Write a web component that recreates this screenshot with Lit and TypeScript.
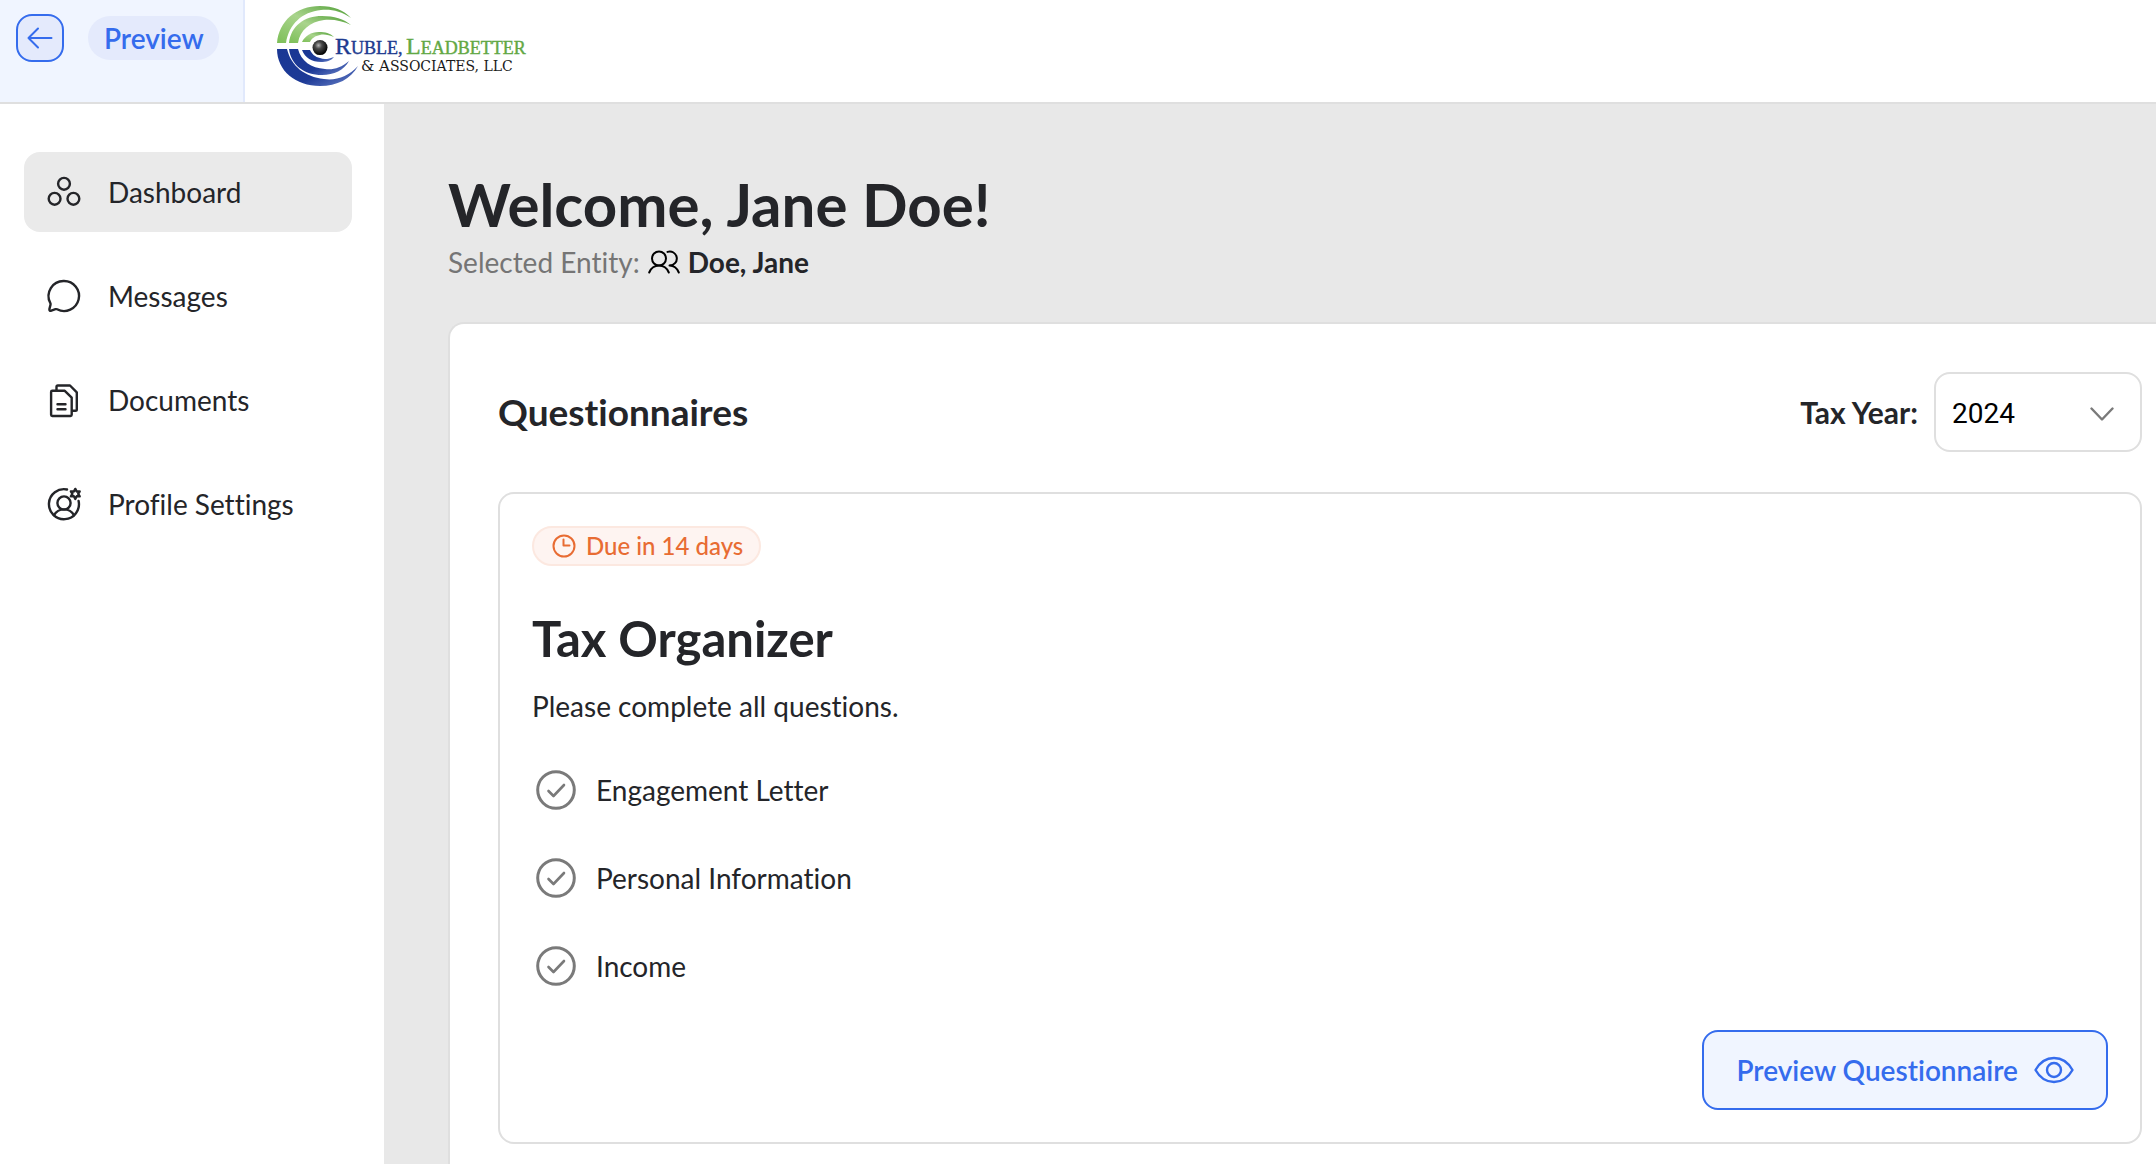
import { LitElement, html, svg, css } from "lit";
import { customElement, state } from "lit/decorators.js";
import { classMap } from "lit/directives/class-map.js";

const icons = {
  dashboard: svg`<circle cx="16" cy="7.800" r="5.900"/><circle cx="6.600" cy="22.800" r="5.900"/><circle cx="25.400" cy="22.800" r="5.900"/>`,
  messages: svg`<path d="M16 1a15 15 0 1 1-6.900 28.300c-.6-.3-1-.3-1.600-.1l-4.200 1.500c-1.300.5-2.200-.3-1.900-1.600l1.100-4.300c.2-.7.1-1.200-.2-1.800A15 15 0 0 1 16 1Z"/>`,
  documents: svg`<path d="M8.500 6.300V2.800c0-.8.6-1.300 1.300-1.300H22l6.800 6.800V25.500c0 .8-.6 1.300-1.300 1.300h-3.300"/><path d="M4.300 6.800h12.500L23.700 13.600v17.200c0 .7-.5 1.200-1.200 1.200H4.300c-.7 0-1.200-.5-1.200-1.200V8c0-.7.5-1.200 1.200-1.200Z"/><path d="M9.500 20.300h8M9.500 25.300h8"/>`,
  profile: svg`<path d="M19 1.500A15 15 0 1 0 30.600 13"/><circle cx="16" cy="15" r="6.600"/><path d="M6 27.300c2-3.700 5.600-5.900 10-5.900s8 2.200 10 5.900"/><path d="m27.300.9 1.400 2.600 3-.1-1.500 2.500 1.500 2.500-3-.1-1.400 2.600-1.400-2.600-3 .1 1.500-2.500-1.500-2.500 3 .1Z"/>`,
};

interface NavItem {
  id: string;
  label: string;
  icon: unknown;
}

const NAV: NavItem[] = [
  { id: "dashboard", label: "Dashboard", icon: icons.dashboard },
  { id: "messages", label: "Messages", icon: icons.messages },
  { id: "documents", label: "Documents", icon: icons.documents },
  { id: "profile", label: "Profile Settings", icon: icons.profile },
];

const STEPS = ["Engagement Letter", "Personal Information", "Income"];

@customElement("firm-logo")
export class FirmLogo extends LitElement {
  static styles = css`
    :host { display: block; }
    svg { display: block; }
    .serif { font-family: "Liberation Serif", serif; }
    .wide { font-family: "DejaVu Serif", serif; }
    .blue { fill: #1d3a8f; stroke: #1d3a8f; }
    .green { fill: #62a844; stroke: #62a844; }
    .name { stroke-width: 0.4; }
    .big { font-size: 24px; }
    .small { font-size: 18px; }
    .tag-big { font-size: 15px; }
    .tag { font-size: 14px; fill: #1a1a1a; }
  `;

  render() {
    return html`
      <svg width="256" height="90" viewBox="0 0 256 90" role="img" aria-label="Ruble, Leadbetter &amp; Associates, LLC">
        <defs>
          <linearGradient id="leaf" x1="0" y1="1" x2="1" y2="0">
            <stop offset="0" stop-color="#7dbf58"/><stop offset=".5" stop-color="#a9d48c"/><stop offset="1" stop-color="#4f9e35"/>
          </linearGradient>
          <linearGradient id="sea" x1="0" y1="0" x2="1" y2="1">
            <stop offset="0" stop-color="#1a3794"/><stop offset=".6" stop-color="#1d3a96"/><stop offset="1" stop-color="#6d86cc"/>
          </linearGradient>
          <radialGradient id="ball" cx=".4" cy=".35" r=".65">
            <stop offset="0" stop-color="#b5b5b5"/><stop offset=".35" stop-color="#4a4a4a"/><stop offset="1" stop-color="#000"/>
          </radialGradient>
        </defs>
        <g fill="url(#leaf)">
          <path d="M0 43C2 21 19 6 43 6c13 0 24 4 31 12C64 11 54 9 44 10 25 12 12 24 9 43Z"/>
          <path d="M12 43C14 26 27 16 45 16c12 0 22 3 29 9-8-4-18-6-27-5-14 2-24 10-26 23Z"/>
          <path d="M25 42c3-6 9-10 17-10 6 0 11 1 15 5-5-2-10-3-14-2-5 1-8 3-10 7Z"/>
        </g>
        <g fill="url(#sea)">
          <path d="M0 49c0 22 19 37 43 37 17 0 31-7 38-20-9 10-22 15-34 13C28 77 14 66 10 49Z"/>
          <path d="M12 49c2 16 15 26 33 26 12 0 22-5 27-14-8 7-16 9-24 8-14-1-24-8-27-20Z"/>
          <path d="M25 50c3 8 10 12 19 12 5 0 10-1 13-5-5 2-10 3-14 1-5-1-8-4-10-8Z"/>
        </g>
        <circle cx="43" cy="47.600" r="7.500" fill="url(#ball)"/>
        <text class="serif name" y="54" x="58"><tspan class="blue big">R</tspan><tspan class="blue small">UBLE,</tspan></text>
        <text class="serif name" y="54" x="129"><tspan class="green big">L</tspan><tspan class="green small">EADBETTER</tspan></text>
        <text class="wide tag" y="71" x="84"><tspan class="tag-big">&amp; A</tspan>SSOCIATES, LLC</text>
      </svg>
    `;
  }
}

@customElement("app-root")
export class AppRoot extends LitElement {
  @state() private active = "dashboard";
  @state() private year = "2024";

  static styles = css`
    :host {
      display: flex;
      flex-direction: column;
      min-height: 100vh;
      box-sizing: border-box;
      background: #fff;
      color: #242529;
      font-family: Lato, "Open Sans", sans-serif;
      font-size: 28px;
      line-height: 40px;
      font-variant-ligatures: none;
    }
    *, *::before, *::after { box-sizing: border-box; }
    h1, h2, h3, p, ul { margin: 0; padding: 0; }
    ul { list-style: none; }
    svg { display: block; flex: none; }
    button, select { font: inherit; color: inherit; cursor: pointer; }
    .line {
      fill: none;
      stroke: currentColor;
      stroke-width: 2;
      stroke-linecap: round;
      stroke-linejoin: round;
    }
    .line.bold { stroke-width: 2.4; }

    .topbar { display: flex; height: 104px; border-bottom: 2px solid #dfdfdf; }
    .preview {
      display: flex;
      align-items: flex-start;
      gap: 24px;
      padding: 14px 24px 0 16px;
      background: #f0f5ff;
      border-right: 2px solid #e1e9fc;
    }
    .back {
      display: grid;
      place-items: center;
      width: 48px;
      height: 48px;
      padding: 0;
      border: 2px solid #356ced;
      border-radius: 16px;
      background: #e4eafc;
      color: #356ced;
    }
    .pill {
      margin-top: 2px;
      padding: 0 15px 0 16px;
      border-radius: 22px;
      background: #e4eafc;
      color: #356ced;
      font-weight: 600;
      line-height: 44px;
    }
    .logo { padding: 0 32px; }

    .body { display: flex; flex: 1; }
    .sidebar { flex: none; width: 384px; padding: 48px 32px 48px 24px; }
    .nav { display: flex; flex-direction: column; gap: 24px; }
    .nav-link {
      display: flex;
      align-items: center;
      gap: 28px;
      height: 80px;
      padding: 0 24px;
      border-radius: 16px;
      color: inherit;
      text-decoration: none;
    }
    .nav-link.active { background: #eaeaea; }

    .main {
      flex: 1;
      min-width: 0;
      display: flex;
      flex-direction: column;
      padding: 64px 0 0 64px;
      background: #e8e8e8;
    }
    .title { font-size: 60px; font-weight: 700; line-height: 72px; }
    .entity { display: flex; align-items: center; gap: 8px; margin: 2px 0 40px; }
    .entity-label { color: #757575; }
    .entity-name { font-weight: 700; }
    .people { color: #000; }

    .panel {
      flex: 1;
      padding: 48px 14px 18px 48px;
      border: 2px solid #dfdfdf;
      border-width: 2px 0 0 2px;
      border-top-left-radius: 16px;
      background: #fff;
    }
    .panel-head { display: flex; align-items: center; justify-content: space-between; margin-bottom: 40px; }
    .heading { font-size: 37px; font-weight: 700; line-height: 48px; }
    .year { display: flex; align-items: center; gap: 16px; }
    .year-label { font-size: 30px; font-weight: 700; }
    .select { display: grid; align-items: center; width: 208px; }
    .select > * { grid-area: 1 / 1; }
    .select select {
      appearance: none;
      width: 100%;
      height: 80px;
      padding: 4px 56px 0 16px;
      border: 2px solid #dfdfdf;
      border-radius: 16px;
      background: #fff;
      color: #000;
      font-family: Roboto, sans-serif;
    }
    .chevron { justify-self: end; margin: 4px 28px 0 0; color: #7a7a7a; pointer-events: none; }

    .card {
      display: flex;
      flex-direction: column;
      align-items: flex-start;
      padding: 32px;
      border: 2px solid #dfdfdf;
      border-radius: 16px;
    }
    .due {
      display: flex;
      align-items: center;
      gap: 10px;
      height: 40px;
      padding: 0 16px 0 18px;
      border: 2px solid #fce8e0;
      border-radius: 20px;
      background: #fef4f1;
      color: #e86c33;
      font-size: 24px;
      font-weight: 500;
    }
    .card-title { margin-top: 42px; font-size: 49px; font-weight: 700; line-height: 60px; }
    .card-text { margin-top: 18px; }
    .steps { display: flex; flex-direction: column; gap: 48px; margin-top: 44px; }
    .step { display: flex; align-items: center; gap: 16px; }
    .step-icon { color: #7a7a7a; }
    .action {
      display: flex;
      align-items: center;
      align-self: flex-end;
      gap: 16px;
      height: 80px;
      margin-top: 44px;
      padding: 0 32px;
      border: 2px solid #356ced;
      border-radius: 16px;
      background: #f0f5ff;
      color: #356ced;
      font-weight: 600;
    }
  `;

  private select(event: Event, id: string) {
    event.preventDefault();
    this.active = id;
  }

  render() {
    return html`
      <header class="topbar">
        <div class="preview">
          <button class="back" aria-label="Back">
            <svg class="line" width="26" height="22" viewBox="0 0 26 22"><path d="M24.500 11H1.500M11 1.500 1.500 11l9.500 9.500"/></svg>
          </button>
          <span class="pill">Preview</span>
        </div>
        <firm-logo class="logo"></firm-logo>
      </header>
      <div class="body">
        <aside class="sidebar">
          <nav class="nav">
            ${NAV.map(
              (item) => html`
                <a
                  href="#${item.id}"
                  class=${classMap({ "nav-link": true, active: item.id === this.active })}
                  @click=${(e: Event) => this.select(e, item.id)}
                >
                  <svg class="line bold" width="32" height="32" viewBox="0 0 32 32" overflow="visible">${item.icon}</svg>
                  <span>${item.label}</span>
                </a>
              `,
            )}
          </nav>
        </aside>
        <main class="main">
          <h1 class="title">Welcome, Jane Doe!</h1>
          <p class="entity">
            <span class="entity-label">Selected Entity:</span>
            <svg class="line people" width="32" height="24" viewBox="0 0 32 24">
              <circle cx="11" cy="8.500" r="7"/><path d="M1.200 22.500c1.800-4.300 5.300-7 9.800-7s8 2.700 9.800 7M19.500 1.900a7 7 0 1 1 2 13.600c4.500 0 7.500 2.700 9.300 7"/>
            </svg>
            <span class="entity-name">Doe, Jane</span>
          </p>
          <section class="panel">
            <div class="panel-head">
              <h2 class="heading">Questionnaires</h2>
              <div class="year">
                <label class="year-label" for="tax-year">Tax Year:</label>
                <div class="select">
                  <select id="tax-year" .value=${this.year} @change=${(e: Event) => (this.year = (e.target as HTMLSelectElement).value)}>
                    <option>2024</option>
                    <option>2023</option>
                  </select>
                  <svg class="line bold chevron" width="24" height="14" viewBox="0 0 24 14"><path d="m1.500 1.500 10.500 11 10.500-11"/></svg>
                </div>
              </div>
            </div>
            <article class="card">
              <div class="due">
                <svg class="line" width="24" height="24" viewBox="0 0 24 24"><circle cx="12" cy="12" r="10.500"/><path d="M11.500 5.500v6h6"/></svg>
                <span>Due in 14 days</span>
              </div>
              <h3 class="card-title">Tax Organizer</h3>
              <p class="card-text">Please complete all questions.</p>
              <ul class="steps">
                ${STEPS.map(
                  (step) => html`
                    <li class="step">
                      <svg class="step-icon" width="48" height="40" viewBox="0 0 48 40" fill="none" stroke="currentColor" stroke-width="3" stroke-linecap="round" stroke-linejoin="round">
                        <circle cx="24" cy="20" r="18.300"/><path stroke-width="2.600" d="m16.500 21 5 5L32 15"/>
                      </svg>
                      <span>${step}</span>
                    </li>
                  `,
                )}
              </ul>
              <button class="action">
                <span>Preview Questionnaire</span>
                <svg class="line bold" width="40" height="28" viewBox="0 0 40 28"><path d="M1.500 14C6 6 12.500 2 20 2s14 4 18.500 12C34 22 27.500 26 20 26S6 22 1.500 14Z"/><circle cx="20" cy="14" r="7"/></svg>
              </button>
            </article>
          </section>
        </main>
      </div>
    `;
  }
}
